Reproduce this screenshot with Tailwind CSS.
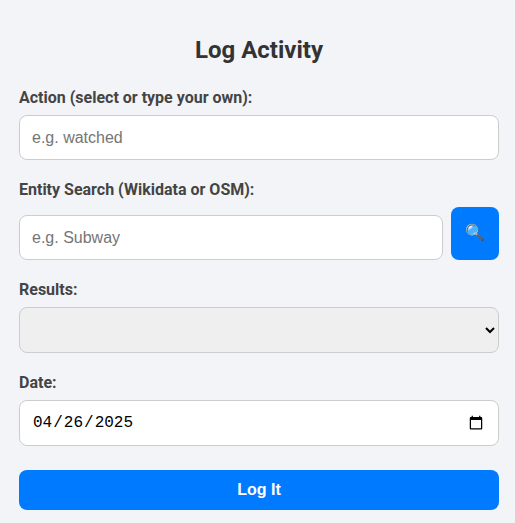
<!DOCTYPE html>
<html lang="en">
<head>
<meta charset="utf-8">
<meta name="viewport" content="width=device-width, initial-scale=1">
<title>Log Activity</title>
<script src="https://cdn.jsdelivr.net/npm/@tailwindcss/browser@4"></script>
</head>
<body class="bg-[#f2f4f8] font-['Roboto',sans-serif] text-base text-[#333]">
<main class="mx-auto max-w-xl pt-9 pr-4 pl-[19px]">
<h1 class="mb-6 text-center text-2xl leading-7 font-bold">Log Activity</h1>
<form>
<label for="action" class="mb-2 block leading-[19px] font-bold text-[#444]">Action (select or type your own):</label>
<input id="action" type="text" placeholder="e.g. watched" class="mb-5 block h-[45px] w-full rounded-lg border border-[#ccc] bg-white px-3 font-['Liberation_Sans',sans-serif] placeholder:text-[#757575]">
<label for="entity" class="mb-2 block leading-[19px] font-bold text-[#444]">Entity Search (Wikidata or OSM):</label>
<div class="mb-5 flex items-end gap-2">
<input id="entity" type="text" placeholder="e.g. Subway" class="block h-[45px] min-w-0 flex-1 rounded-lg border border-[#ccc] bg-white px-3 font-['Liberation_Sans',sans-serif] placeholder:text-[#757575]">
<button type="button" aria-label="Search" class="flex h-[53px] w-12 items-center justify-center rounded-lg bg-[#007bff] pb-0.5 font-['Liberation_Sans',sans-serif] text-white">🔍</button>
</div>
<label for="results" class="mb-2 block leading-[19px] font-bold text-[#444]">Results:</label>
<select id="results" class="mb-5 block h-[46px] w-full rounded-lg border border-[#ccc] bg-[#efefef] px-3 font-['Liberation_Sans',sans-serif] text-black"></select>
<label for="date" class="mb-2 block leading-[19px] font-bold text-[#444]">Date:</label>
<input id="date" type="date" value="2025-04-26" class="mb-6 block h-[46px] w-full rounded-lg border border-[#ccc] bg-white px-3 font-['Liberation_Mono',monospace] text-black">
<button type="submit" class="block h-10 w-full rounded-lg bg-[#007bff] font-['Liberation_Sans',sans-serif] font-bold text-white">Log It</button>
</form>
</main>
</body>
</html>
